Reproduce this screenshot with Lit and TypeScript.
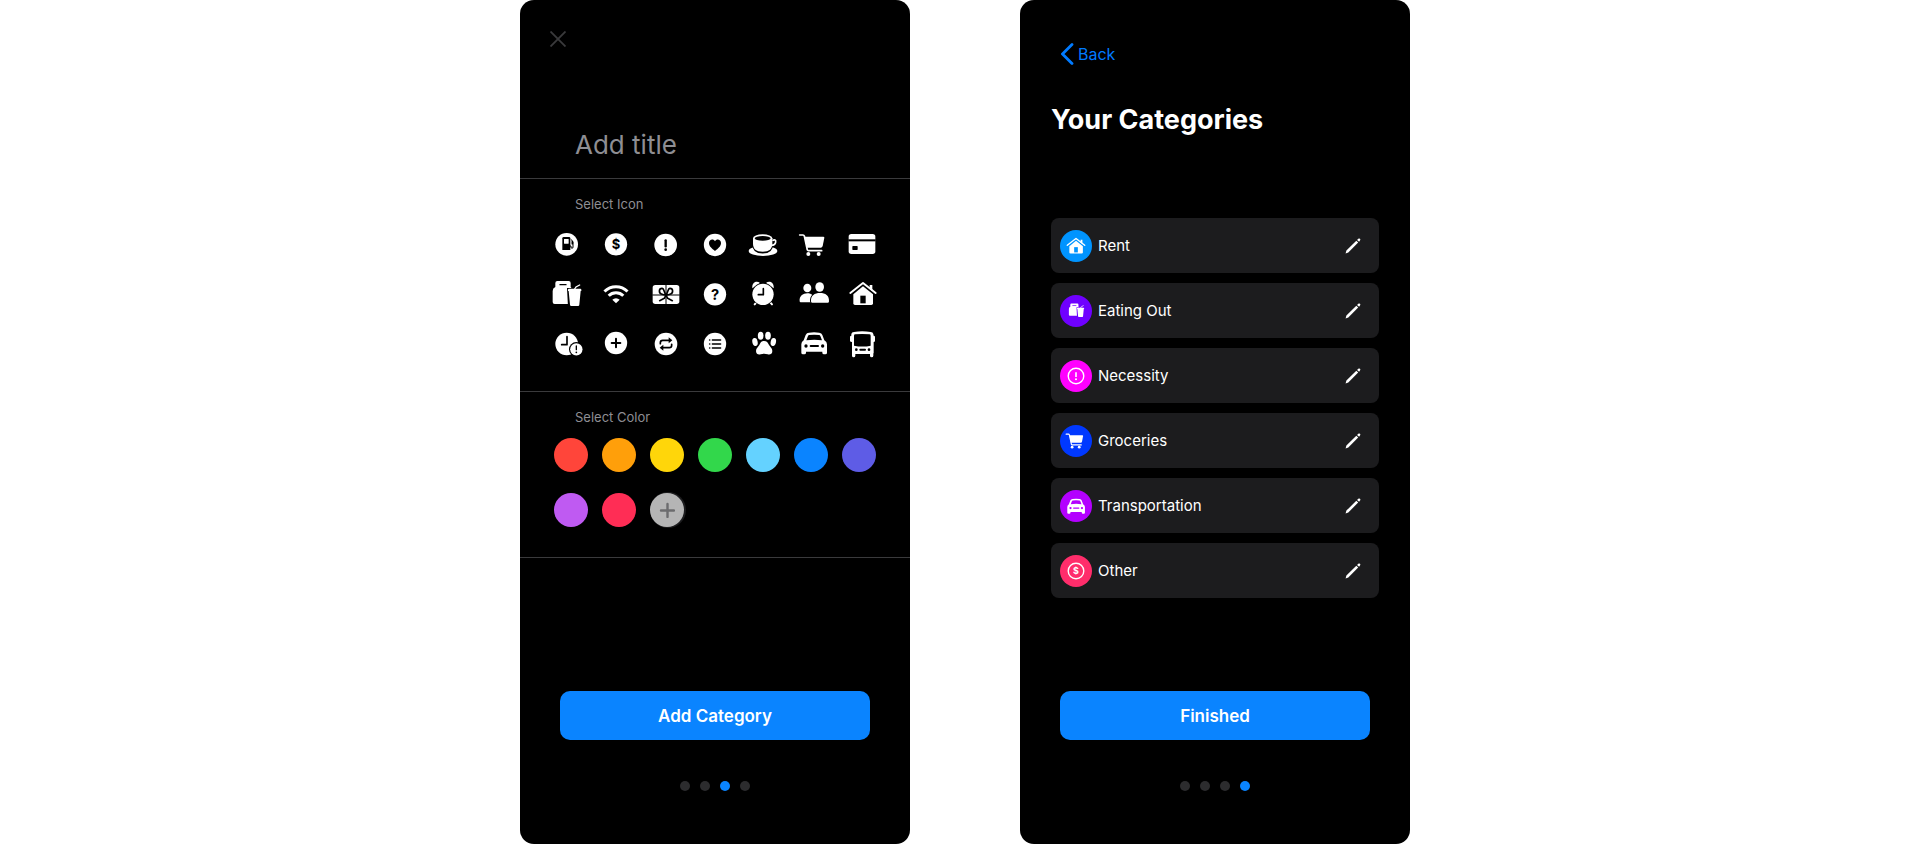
import { LitElement, html, svg, css, TemplateResult } from "lit";
import { customElement, property } from "lit/decorators.js";
import { classMap } from "lit/directives/class-map.js";

const glyphs: Record<string, TemplateResult> = {
  fuel: svg`<circle cx="-1" cy="-2" r="34"/>
    <path class="cut" d="M-14 -20q0 -4 4 -4h16q4 0 4 4V15H-14Z"/>
    <rect x="-9" y="-18" width="14" height="14" rx="1"/>
    <path class="line" d="M10 3h2v3q0 4 3 4t3 -4V-9l-5 -7" stroke-width="3"/>
    <path class="line" d="M16 -10v6" stroke-width="5"/>`,
  dollar: svg`<circle cy="-2" r="33.5"/><text class="cut sign" y="12" font-size="39">$</text>`,
  alert: svg`<circle cx="-1" r="34"/>
    <path class="line" d="M-1 -14V4" stroke-width="7"/><circle class="cut" cx="-1" cy="14" r="4"/>`,
  heart: svg`<circle r="33.5"/>
    <path class="cut" d="M0 18C-9 11 -18 4 -18 -6C-18 -18 -4 -20 0 -11C4 -20 18 -18 18 -6C18 4 9 11 0 18Z"/>`,
  cup: svg`<ellipse cx="-3" cy="18" rx="43" ry="15"/>
    <path d="M-33 -20V-4C-33 12 -24 23 -4 23S25 12 25 -4V-20Z" class="cut line" stroke-width="5"/>
    <path d="M25 -13c7 -5 11 -2 10 4s-6 10 -13 10" fill="none" stroke="currentColor" stroke-width="5"/>
    <path d="M-33 -20V-4C-33 11 -24 20 -4 20S25 11 25 -4V-20Z"/>
    <ellipse cx="-4" cy="-20" rx="29" ry="12"/><ellipse class="cut" cx="-4" cy="-20" rx="24" ry="7"/>`,
  cart: svg`<path d="M-43 -30h10q3 0 4 3l9 42q1 2 3 2H23" fill="none" stroke="currentColor" stroke-width="5" stroke-linecap="round" stroke-linejoin="round"/>
    <path d="M-29 -25H28q3 0 3 3l-5 25q-1 4 -5 5H-22Z"/>
    <circle cx="-17" cy="27" r="6"/><circle cx="14" cy="27" r="6"/>`,
  card: svg`<rect x="-43" y="-33" width="80" height="60" rx="8"/>
    <rect class="cut" x="-44" y="-17" width="82" height="6"/>
    <rect class="cut" x="-32" y="3" width="16" height="12" rx="2"/>`,
  takeout: svg`<path d="M-35 -33q0 -6 6 -6H5q6 0 6 6v12q5 4 5 10V30H-37q-6 0 -6 -6V-9q0 -9 8 -12Z"/>
    <path class="line" d="M-21 -28H-3" stroke-width="4"/>
    <path class="cut" d="M0 -18H20L28 -30L48 -32V40H3Z"/>
    <path d="M3 -13q0 -3 3 -3h34q3 0 3 3v4h-2l-4 41q0 4 -4 4H13q-4 0 -4 -4L5 -9H3Z"/>
    <path d="M23 -15l4 -6 11 -6" fill="none" stroke="currentColor" stroke-width="4" stroke-linecap="round"/>`,
  wifi: svg`<path d="M-34.6 -7.6A49 49 0 0 1 34.6 -7.6M-21.9 5.1A31 31 0 0 1 21.9 5.1" fill="none" stroke="currentColor" stroke-width="9"/>
    <path d="M0 28L-11 17A15.5 15.5 0 0 1 11 17Z"/>`,
  gift: svg`<rect x="-40" y="-27" width="80" height="57" rx="8"/>
    <path class="line" d="M-40 3H40M0 -27V30" stroke-width="3"/>
    <path class="line" d="M0 3C-7 -5 -5 -17 -12 -17C-22 -17 -22 -3 -14 0C-9 2 -4 3 0 3C4 3 9 2 14 0C22 -3 22 -17 12 -17C5 -17 7 -5 0 3L-5 13L-19 20M0 3L5 13L19 20" stroke-width="5"/>`,
  question: svg`<circle cy="1" r="33.5"/><text class="cut sign" y="17" font-size="44">?</text>`,
  alarm: svg`<path d="M-20 22l-8 9M16 22l8 9" stroke="currentColor" stroke-width="6" stroke-linecap="round"/>
    <path d="M-35 -17C-37 -36 -21 -41 -12 -33ZM29 -17C31 -36 15 -41 6 -33Z"/>
    <circle cx="-3" cy="1" r="34" class="cut"/><circle cx="-3" cy="1" r="32"/>
    <path class="line" d="M-2 -16V2H-17" stroke-width="5"/>`,
  people: svg`<ellipse cx="-20" cy="-18" rx="12" ry="13"/>
    <path d="M-43 22C-45 6 -33 -2 -20 -2S1 4 1 25H-40q-3 0 -3 -3Z"/>
    <path class="cut line" d="M-9 22C-10 4 2 -3 18 -3S46 4 45 22q0 3 -3 3H-6q-3 0 -3 -3Z" stroke-width="6"/>
    <ellipse cx="17" cy="-21" rx="13" ry="14.5"/>
    <path d="M-9 22C-10 4 2 -3 18 -3S46 4 45 22q0 4 -3 4H-6q-3 0 -3 -4Z"/>`,
  house: svg`<path d="M20 -27H28V-8L20 -15Z"/>
    <path d="M-38 -3L0 -33L38 -3" fill="none" stroke="currentColor" stroke-width="6" stroke-linecap="round" stroke-linejoin="round"/>
    <path d="M0 -23L30 1V28q0 5 -5 5H-24q-5 0 -5 -5V1Z"/>
    <rect class="cut" x="-8" y="5" width="16" height="23"/>`,
  overdue: svg`<circle cx="-1" cy="3" r="34"/>
    <path class="line" d="M0 -19V5H-16" stroke-width="5"/>
    <circle class="cut" cx="28" cy="19" r="22"/><circle cx="28" cy="19" r="18.5"/>
    <path class="line" d="M28 9V20" stroke-width="4"/><circle class="cut" cx="28" cy="28" r="2.6"/>`,
  plus: svg`<circle cy="0" r="33.5"/><path class="line" d="M-13 0H13M0 -13V13" stroke-width="6"/>`,
  repeat: svg`<circle cy="3" r="34"/>
    <path class="line" d="M-17 2v-3q0 -7 7 -7H12M17 4v3q0 7 -7 7H-12" stroke-width="5"/>
    <path class="cut" d="M8 -17L19 -8L8 1ZM-8 5L-19 14L-8 23Z"/>`,
  list: svg`<circle cy="3" r="33.5"/>
    <path class="line" d="M-8 -9H17M-8 3H17M-8 15H17" stroke-width="4"/>
    <path class="line" d="M-16 -9h.1M-16 3h.1M-16 15h.1" stroke-width="5"/>`,
  paw: svg`<ellipse cx="-27" cy="-3" rx="8" ry="12" transform="rotate(-12 -27 -3)"/>
    <ellipse cx="-10" cy="-22" rx="8.5" ry="12"/><ellipse cx="12" cy="-22" rx="8.5" ry="12"/>
    <ellipse cx="28" cy="-3" rx="8" ry="12" transform="rotate(12 28 -3)"/>
    <path d="M0 -6C8 -6 12 -1 15 6C18 12 25 15 25 24C25 34 17 36 11 34C4 32 -3 32 -10 34C-17 36 -24 33 -24 24C-24 15 -17 12 -14 6C-11 -1 -8 -6 0 -6Z"/>`,
  car: svg`<path d="M-31 -8L-25 -24q3 -7 10 -7q15 -2 31 0q7 1 9 7l6 16q8 4 8 12V29q0 5 -5 5h-4q-5 0 -5 -5v-3H-24v3q0 5 -5 5h-4q-5 0 -5 -5V4q0 -8 7 -12Z"/>
    <path class="cut" d="M-23 -8L-18 -21q1 -3 4 -3q14 -2 29 0q3 0 4 3l5 13q-23 -3 -47 0Z"/>
    <circle class="cut" cx="-24" cy="9" r="5"/><circle class="cut" cx="26" cy="9" r="5"/>
    <path class="line" d="M-10 9H12" stroke-width="6"/>`,
  bus: svg`<path d="M-35 -27q1 -6 8 -6q24 -4 50 0q7 0 8 6l1 5q4 0 4 4V-7q0 4 -4 4V31h-1v7q0 5 -5 5t-5 -5v-5H-23v5q0 5 -5 5t-5 -5V-3q-6 0 -6 -4V-18q0 -4 4 -4Z"/>
    <path class="cut" d="M-27 -22q0 -4 4 -4q20 -2 42 0q4 0 4 4V8q-24 5 -50 0Z"/>
    <circle class="cut" cx="-20" cy="20" r="4"/><circle class="cut" cx="18" cy="20" r="4"/>
    <path class="line" d="M-8 20H6" stroke-width="6"/>`,
  alertRing: svg`<circle r="34" fill="none" stroke="currentColor" stroke-width="6"/>
    <path d="M0 -16V4" stroke="currentColor" stroke-width="7"/><circle cy="14" r="4.5"/>`,
  dollarRing: svg`<circle r="34" fill="none" stroke="currentColor" stroke-width="6"/>
    <text class="sign" y="14" font-size="39">$</text>`,
};

@customElement("category-icon")
class CategoryIcon extends LitElement {
  @property() name = "";

  static styles = css`
    :host { display: block; width: 32px; height: 32px; color: #fff; }
    .glyph { display: block; width: 100%; height: 100%; fill: currentColor; overflow: visible; }
    .line { fill: none; stroke: var(--cut, #000); stroke-linecap: round; stroke-linejoin: round; }
    .cut { fill: var(--cut, #000); }
    .sign { font-family: Inter, "Liberation Sans", sans-serif; font-weight: 700; text-anchor: middle; }
  `;

  render() {
    return html`<svg class="glyph" viewBox="-48 -48 96 96" aria-hidden="true">${glyphs[this.name]}</svg>`;
  }
}

@customElement("page-footer")
class PageFooter extends LitElement {
  @property() label = "";
  @property({ type: Number }) step = 0;

  static styles = css`
    :host { display: block; margin-top: auto; padding: 0 40px 53px; }
    .action {
      display: block; width: 100%; height: 49px; padding: 0; border: 0; border-radius: 10px;
      background: #0a84ff; color: #fff; font: 600 17px/24px Inter, "Liberation Sans", sans-serif;
    }
    .dots { display: flex; justify-content: center; gap: 10px; margin-top: 41px; }
    .dot { width: 10px; height: 10px; border-radius: 50%; background: #2c2c2e; }
    .current { background: #0a84ff; }
  `;

  render() {
    return html`
      <button class="action">${this.label}</button>
      <div class="dots">
        ${[0, 1, 2, 3].map((i) => html`<span class=${classMap({ dot: true, current: i === this.step })}></span>`)}
      </div>
    `;
  }
}

const icons = [
  "fuel", "dollar", "alert", "heart", "cup", "cart", "card",
  "takeout", "wifi", "gift", "question", "alarm", "people", "house",
  "overdue", "plus", "repeat", "list", "paw", "car", "bus",
];

const colors = [
  ["red", "#ff453a"], ["orange", "#ff9f0a"], ["yellow", "#ffd60a"], ["green", "#32d74b"],
  ["light blue", "#64d2ff"], ["blue", "#0a84ff"], ["indigo", "#5e5ce6"],
  ["purple", "#bf5af2"], ["pink", "#ff2d55"],
];

const categories = [
  { label: "Rent", icon: "house", color: "#0094ff" },
  { label: "Eating Out", icon: "takeout", color: "#6f00ff" },
  { label: "Necessity", icon: "alertRing", color: "#ff00ff" },
  { label: "Groceries", icon: "cart", color: "#0038ff" },
  { label: "Transportation", icon: "car", color: "#b300ff" },
  { label: "Other", icon: "dollarRing", color: "#ff2d6b" },
];

@customElement("app-root")
class AppRoot extends LitElement {
  static styles = css`
    :host {
      display: flex; justify-content: center; gap: 110px; flex-wrap: wrap; padding-left: 10px;
      background: #fff; font-family: Inter, "Liberation Sans", sans-serif;
    }
    *, *::before { box-sizing: border-box; }
    button { padding: 0; border: 0; background: none; font-family: inherit; cursor: pointer; }
    .screen {
      display: flex; flex-direction: column; flex: 0 1 390px; min-height: 100vh;
      border-radius: 14px; background: #000; color: #fff;
    }
    .close { align-self: flex-start; margin: 31px 30px 0; }
    .mark { display: block; }
    .title-input {
      margin: 78px 0 13px; padding: 0 55px; width: 100%; height: 40px; border: 0; outline: 0;
      background: none; color: #fff; font: 400 26px/40px Inter, "Liberation Sans", sans-serif;
    }
    .title-input::placeholder { color: #8e8e93; opacity: 1; }
    .section { border-top: 1px solid #3a3a3c; padding-top: 17px; }
    .last { border-bottom: 1px solid #3a3a3c; }
    .caption { margin: 0 55px; color: #8e8e93; font-size: 13px; line-height: 16px; font-weight: 400; }
    .icons {
      display: grid; grid-template-columns: repeat(7, 1fr); grid-auto-rows: 49px;
      place-items: center; padding: 8px 22px 24px;
    }
    .swatches {
      display: grid; grid-template-columns: repeat(7, 1fr); row-gap: 21px;
      justify-items: center; padding: 13px 27px 30px;
    }
    .swatch { display: grid; place-items: center; width: 34px; height: 34px; border-radius: 50%; }
    .more { background: #b5b5b5; box-shadow: 1px 0 0 1px #1c1c1e; }
    .back {
      display: flex; align-items: center; align-self: flex-start; gap: 4px;
      margin: 42px 41px 0; color: #007aff; font-size: 16px; line-height: 24px; text-decoration: none;
    }
    .heading { margin: 37px 31px 0; font-size: 27px; line-height: 34px; font-weight: 700; }
    .list {
      display: flex; flex-direction: column; gap: 10px;
      margin: 81px 31px 24px; padding: 0; list-style: none;
    }
    .row {
      display: flex; align-items: center; gap: 6px; height: 55px; padding: 0 18px 0 9px;
      border-radius: 8px; background: #1c1c1e;
    }
    .badge { display: grid; place-items: center; width: 32px; height: 32px; border-radius: 50%; background: var(--cut); }
    .badge-icon { width: 22px; height: 22px; }
    .compact { width: 17px; height: 17px; }
    .name { flex: 1; font-size: 15px; line-height: 24px; }
  `;

  render() {
    return html`
      <main class="screen">
        <button class="close" aria-label="Close">
          <svg class="mark" width="16" height="16" viewBox="0 0 16 16">
            <path d="M.5 .5L15.5 15.5M15.5 .5L.5 15.5" stroke="#3a3a3c" stroke-width="1.8" />
          </svg>
        </button>
        <input class="title-input" type="text" placeholder="Add title" aria-label="Title" />
        <section class="section">
          <h2 class="caption">Select Icon</h2>
          <div class="icons">
            ${icons.map((n) => html`<button aria-label=${n}><category-icon name=${n}></category-icon></button>`)}
          </div>
        </section>
        <section class="section last">
          <h2 class="caption">Select Color</h2>
          <div class="swatches">
            ${colors.map(([n, c]) => html`<button class="swatch" aria-label=${n} style="background:${c}"></button>`)}
            <button class="swatch more" aria-label="More colors">
              <svg class="mark" width="16" height="16" viewBox="0 0 16 16">
                <path d="M2 8.5H15M8.5 2V15" stroke="#6c6c6e" stroke-width="2.4" stroke-linecap="round" />
              </svg>
            </button>
          </div>
        </section>
        <page-footer label="Add Category" step="2"></page-footer>
      </main>

      <main class="screen">
        <a class="back" href="#">
          <svg class="mark" width="13" height="22" viewBox="0 0 13 22">
            <path d="M11 1.5L1.5 11L11 20.5" fill="none" stroke="#007aff" stroke-width="2.8" stroke-linecap="round" />
          </svg>
          Back
        </a>
        <h1 class="heading">Your Categories</h1>
        <ul class="list">
          ${categories.map(
            (c) => html`<li class="row">
              <span class="badge" style="--cut:${c.color}">
                <category-icon
                  class=${classMap({ "badge-icon": true, compact: c.icon === "takeout" })}
                  name=${c.icon}
                ></category-icon>
              </span>
              <span class="name">${c.label}</span>
              <button aria-label="Edit ${c.label}">
                <svg class="mark" width="16" height="16" viewBox="0 0 16 16" fill="#fff">
                  <path d="M.6 15.4L1.4 12.6L11.3 2.7L13.2 4.6L3.3 14.5ZM12.1 1.9L13.2 .8q1 -.8 1.8 0t0 1.8L14.1 3.8Z" />
                </svg>
              </button>
            </li>`
          )}
        </ul>
        <page-footer label="Finished" step="3"></page-footer>
      </main>
    `;
  }
}
